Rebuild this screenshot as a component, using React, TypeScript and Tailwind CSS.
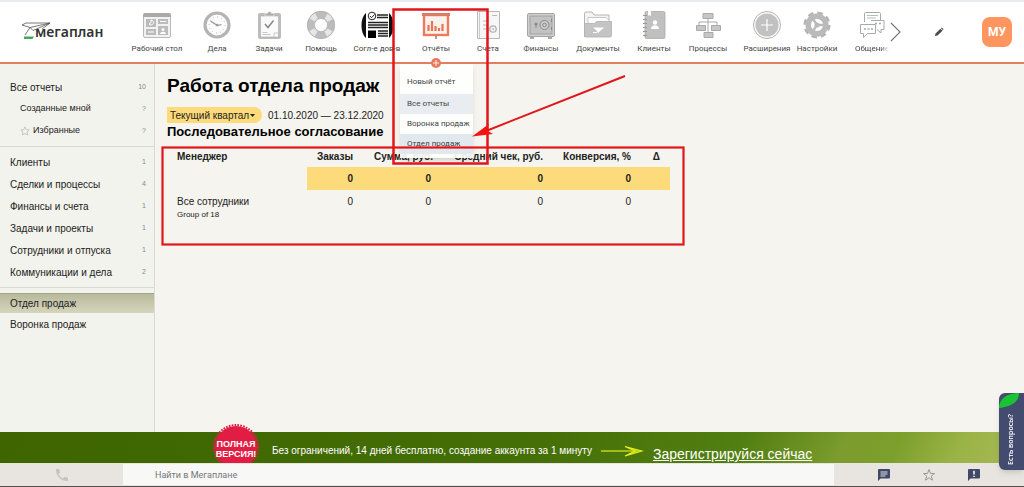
import React from "react";

const svg = "h-[30px] w-[30px] shrink-0";

function DesktopIcon() {
  return (
    <svg viewBox="0 0 30 30" className={svg} fill="none" aria-hidden="true">
      <rect x="1.500" y="4.500" width="27" height="23" rx="1.500" fill="#f1f1f1" stroke="#b9b9b9" />
      <path d="M1 5a2 2 0 0 1 2-2h24a2 2 0 0 1 2 2v2H1z" fill="#a9a9a9" />
      <path d="M4 9h10v8H4zM16 9h10v5H16zM4 19h10v6H4zM16 16h10v9H16z" fill="#bbb" />
      <path d="M7 14a2.500 2.500 0 1 0 2-4v2.500zM18 11.500h6M6 22h6" stroke="#fff" />
      <circle cx="21" cy="19.500" r="1.500" fill="#fff" />
      <path d="M18 24c0-3 6-3 6 0z" fill="#fff" />
    </svg>
  );
}

function ClockIcon() {
  return (
    <svg viewBox="0 0 30 30" className={svg} fill="none" aria-hidden="true">
      <circle cx="15" cy="15" r="12" fill="#fbfbfb" stroke="#b4b4b4" strokeWidth="3.200" />
      <circle cx="15" cy="15" r="8" stroke="#a9a9a9" strokeDasharray="0.8 3.39" />
      <path d="M8.500 11l7 4.500 4-1" stroke="#999" strokeWidth="1.200" />
      <circle cx="15" cy="15" r="1.300" fill="#999" />
    </svg>
  );
}

function TasksIcon() {
  return (
    <svg viewBox="0 0 30 30" className={svg} fill="none" aria-hidden="true">
      <rect x="4" y="3" width="23" height="26" rx="2" fill="#bcbcbc" />
      <rect x="6.500" y="6" width="18" height="21" fill="#fafafa" stroke="#aaa" strokeWidth=".6" />
      <path d="M11 6V3.500h2.500a2 2 0 0 1 4 0H20V6z" fill="#aaa" stroke="#fff" strokeWidth=".5" />
      <path d="M11 14l3 3.500 5.500-7" stroke="#888" strokeWidth="1.500" />
      <path d="M8.500 22.500h5M8.500 24.500h8M20 27v-4h4.500" stroke="#bbb" strokeWidth=".8" />
    </svg>
  );
}

function HelpIcon() {
  return (
    <svg viewBox="0 0 30 30" className={svg} fill="none" aria-hidden="true">
      <circle cx="15" cy="15" r="10.200" stroke="#bcbcbc" strokeWidth="7.400" />
      <circle cx="15" cy="15" r="10.200" stroke="#e6e6e6" strokeWidth="6" strokeDasharray="6 10.020" strokeDashoffset="-5" />
      <circle cx="15" cy="15" r="13.700" stroke="#aaa" strokeWidth=".6" />
      <circle cx="15" cy="15" r="6.500" stroke="#aaa" strokeWidth=".6" />
    </svg>
  );
}

function ApprovalIcon() {
  return (
    <svg viewBox="0 0 34 30" className="h-[30px] w-[34px] shrink-0" fill="none" aria-hidden="true">
      <path d="M6 3C0 8 0 23 6 28zM29 3c6 5 6 20 0 25z" fill="#111" />
      <circle cx="12" cy="6" r="3.800" stroke="#222" />
      <path d="M10 6l1.600 1.700L14.500 4.500" stroke="#222" />
      <path d="M17 5h11M17 7.500h11M8 12.500h20M8 15h20M8 17.500h20M18 21h10M18 23.500h10M18 26h10" stroke="#222" strokeWidth="1.300" />
      <path d="M8 20.500h8v7.500H8z" fill="#000" />
    </svg>
  );
}

function ReportsIcon() {
  return (
    <svg viewBox="0 0 30 30" className={svg} fill="none" aria-hidden="true">
      <rect x="3" y="5" width="24" height="20" fill="#fdf1ed" stroke="#ea7c5e" strokeWidth="2.400" />
      <path d="M1 3h28v3H1z" fill="#d97b62" />
      <path d="M7.500 21v-6M11 21V11M14.500 21v-5M18 21v-3M21.500 21v-7" stroke="#ea7351" strokeWidth="2.200" />
      <path d="M15 26v3" stroke="#9b7a70" strokeWidth="1.500" />
    </svg>
  );
}

function InvoiceIcon() {
  return (
    <svg viewBox="0 0 30 30" className={svg} fill="none" aria-hidden="true">
      <path d="M4.500 1.500h22v27h-22z" fill="#f7f7f7" stroke="#b8b8b8" />
      <path d="M6.500 2v26" stroke="#c9c9c9" />
      <path d="M10 11h6M10 15h5M10 19h4M19 5.500h5" stroke="#bbb" />
      <circle cx="20" cy="19" r="3.200" stroke="#b0b0b0" strokeWidth="1.300" />
      <circle cx="20" cy="19" r="1" fill="#bbb" />
    </svg>
  );
}

function SafeIcon() {
  return (
    <svg viewBox="0 0 30 30" className={svg} fill="none" aria-hidden="true">
      <rect x="1.500" y="3.500" width="27" height="23" rx="1.500" fill="#cfcfcf" stroke="#a5a5a5" />
      <rect x="4" y="6" width="22" height="18" fill="#c2c2c2" stroke="#999" strokeWidth=".8" />
      <circle cx="18.500" cy="15" r="4.500" fill="#ccc" stroke="#888" />
      <circle cx="18.500" cy="15" r="1.800" stroke="#888" />
      <circle cx="10" cy="14" r="1.600" fill="#888" />
      <path d="M10 14v4M25.500 9v3M25.500 17v3" stroke="#888" />
      <path d="M4 27h4v2H4zM22 27h4v2h-4z" fill="#aaa" />
    </svg>
  );
}

function DocumentsIcon() {
  return (
    <svg viewBox="0 0 30 30" className={svg} fill="none" aria-hidden="true">
      <path d="M1.500 27V3.500A1.500 1.500 0 0 1 3 2h6l2 3h15v8" fill="#f4f4f4" stroke="#b5b5b5" />
      <path d="M5 7.500h18l4 4V15H5z" fill="#fff" stroke="#bbb" strokeWidth=".8" />
      <path d="M1.500 13.500h10l2-2h15v14a1.500 1.500 0 0 1-1.500 1.500H3a1.500 1.500 0 0 1-1.500-1.500z" fill="#c4c4c4" stroke="#b0b0b0" strokeWidth=".8" />
      <path d="M10 17.500h11l-6 5.500-1.500-2.500z" fill="#fff" />
      <path d="M10 22.500h4" stroke="#fff" />
    </svg>
  );
}

function ClientsIcon() {
  return (
    <svg viewBox="0 0 30 30" className={svg} fill="none" aria-hidden="true">
      <rect x="6" y="1.500" width="20" height="27" rx="1.500" fill="#c0c0c0" stroke="#a9a9a9" strokeWidth=".8" />
      <path d="M4 5.500h4M4 9.500h4M4 13.500h4M4 17.500h4M4 21.500h4M4 25.500h4" stroke="#999" strokeWidth="1.200" />
      <path d="M9 1h3v5l-1.500-1L9 6z" fill="#fff" />
      <circle cx="16" cy="12.500" r="2.200" fill="#fff" />
      <path d="M12 19c0-5 8-5 8 0z" fill="#fff" />
    </svg>
  );
}

function ProcessesIcon() {
  return (
    <svg viewBox="0 0 30 30" className={svg} fill="none" aria-hidden="true">
      <path d="M15 8v14M6 16v-4h18v4" stroke="#aaa" />
      <path d="M10 3.500h10v5H10zM3.500 15.500h9v5h-9zM18.500 15.500h9v5h-9zM11 22.500h9v5h-9z" fill="#c6c6c6" stroke="#a9a9a9" />
    </svg>
  );
}

function ExtensionsIcon() {
  return (
    <svg viewBox="0 0 30 30" className={svg} fill="none" aria-hidden="true">
      <circle cx="15" cy="15" r="13.500" stroke="#b0b0b0" />
      <circle cx="15" cy="15" r="11.600" fill="#c1c1c1" />
      <path d="M15 9v12M9 15h12" stroke="#fff" strokeWidth="1.200" />
    </svg>
  );
}

function SettingsIcon() {
  return (
    <svg viewBox="0 0 30 30" className={svg} fill="none" aria-hidden="true">
      <circle cx="15" cy="15" r="12" stroke="#b4b4b4" strokeWidth="3" strokeDasharray="5.400 4.025" />
      <circle cx="15" cy="15" r="9" stroke="#bababa" strokeWidth="5" />
      <circle cx="15" cy="15" r="6.500" stroke="#a6a6a6" strokeWidth=".6" />
      <path d="M15 15h7M15 15l-4-6M15 15l-4 6" stroke="#bababa" strokeWidth="2.400" />
      <circle cx="15" cy="15" r="2.600" fill="#bababa" />
    </svg>
  );
}

function ChatIcon() {
  return (
    <svg viewBox="0 0 30 30" className={svg} fill="none" stroke="#a6abab" aria-hidden="true">
      <path d="M7.500 12V3.500A1 1 0 0 1 8.500 2.500h14a1 1 0 0 1 1 1V10" />
      <path d="M10 5.500h11M10 8h9" strokeWidth=".8" />
      <path d="M14 10.500h13v9h-3v3.500l-4-3.500" fill="#fff" />
      <path d="M3.500 14.500h15v9h-8l-4 4v-4h-3z" fill="#fff" />
      <path d="M7 19h2M10.500 19h2M14 19h2M18 13.500h2M22 13.500h2" strokeWidth="1.500" />
    </svg>
  );
}

const nav = [
  { label: "Рабочий стол", width: "w-[70px]", Icon: DesktopIcon },
  { label: "Дела", width: "w-[50px]", Icon: ClockIcon },
  { label: "Задачи", width: "w-[54px]", Icon: TasksIcon },
  { label: "Помощь", width: "w-[50px]", Icon: HelpIcon },
  { label: "Согл-е дов-в", width: "w-[62px]", Icon: ApprovalIcon },
  { label: "Отчёты", width: "w-[56px]", Icon: ReportsIcon, current: true },
  { label: "Счета", width: "w-[48px]", Icon: InvoiceIcon },
  { label: "Финансы", width: "w-[58px]", Icon: SafeIcon },
  { label: "Документы", width: "w-[56px]", Icon: DocumentsIcon },
  { label: "Клиенты", width: "w-[56px]", Icon: ClientsIcon },
  { label: "Процессы", width: "w-[52px]", Icon: ProcessesIcon },
  { label: "Расширения", width: "w-[66px]", Icon: ExtensionsIcon },
  { label: "Настройки", width: "w-[34px]", Icon: SettingsIcon },
  { label: "Общение", width: "w-[54px] pl-[22px]", Icon: ChatIcon, fading: true },
];

const menu = [
  { label: "Новый отчёт", look: "h-6" },
  { label: "Все отчеты", look: "h-5 bg-[#e9edf2]" },
  { label: "Воронка продаж", look: "h-5" },
  { label: "Отдел продаж", look: "h-5 bg-[#e1e8ee]" },
];

const sections = [
  ["Клиенты", "1"],
  ["Сделки и процессы", "4"],
  ["Финансы и счета", "1"],
  ["Задачи и проекты", "1"],
  ["Сотрудники и отпуска", "1"],
  ["Коммуникации и дела", "2"],
];

function Header() {
  return (
    <header className="relative z-10 flex h-16 items-stretch border-t-2 border-b-2 border-t-[#e9ecee] border-b-[#e37f60] bg-white font-[Roboto,sans-serif]">
      <a href="#" className="relative flex w-[122px] shrink-0 items-center pl-[35px]" aria-label="мегаплан">
        <svg viewBox="0 0 30 18" className="absolute top-5 left-[21px] h-[18px] w-[30px]" fill="none" aria-hidden="true">
          <path d="M1 3l4-2h24l-8 6M1 3l8 2.500L29 1M9 5.500L4 13M9 5.500l3 3L29 1" stroke="#555" strokeWidth=".8" />
          <path d="M3 14.500h10l-1.500 2.500H3z" fill="#41a85f" />
        </svg>
        <span className="relative text-[14px] leading-5 font-semibold text-[#333] font-['Noto_Sans',sans-serif]">мегаплан</span>
      </a>
      <nav className="flex shrink-0">
        {nav.map(({ label, width, Icon, current, fading }) => (
          <a key={label} href="#" className={"relative flex shrink-0 flex-col items-center pt-2 " + width}>
            <Icon />
            <span className={"mt-1 text-[8px] leading-[10px] whitespace-nowrap text-[#444] " + (fading ? "mask-r-from-75%" : "")}>{label}</span>
            {current && (
              <svg viewBox="0 0 10 10" className="absolute -bottom-1.5 left-1/2 z-10 h-[10px] w-[10px] -translate-x-1/2" aria-hidden="true">
                <circle cx="5" cy="5" r="5" fill="#e8795a" />
                <path d="M5 2v6M2 5h6" stroke="#ffe3da" strokeWidth="1.200" />
              </svg>
            )}
          </a>
        ))}
      </nav>
      <button type="button" aria-label="Далее" className="w-4 shrink-0">
        <svg viewBox="0 0 16 24" className="h-6 w-4" fill="none" stroke="#777" aria-hidden="true">
          <path d="M3 3l9 9-9 9" strokeWidth="1.200" />
        </svg>
      </button>
      <div className="ml-auto flex items-center gap-[38px] pr-3">
        <button type="button" aria-label="Редактировать">
          <svg viewBox="0 0 10 10" className="h-[10px] w-[10px]" fill="#4b4b5c" aria-hidden="true">
            <path d="M1 9l.5-2.500L6.500 1.800l2 2L3.500 8.500zM7 1.300l.8-.8 1.800 1.800-.8.8z" />
          </svg>
        </button>
        <button type="button" className="h-[30px] w-[30px] rounded-lg bg-[#ff965f] text-[12px] font-bold text-white">МУ</button>
      </div>
      <ul className="absolute top-[62px] left-[400px] w-[73px] bg-white/90 pt-1.5 pb-1 text-[8px] text-[#444] shadow-md">
        {menu.map((item) => (
          <li key={item.label} className={"flex items-center pl-[7px] whitespace-nowrap " + item.look}>
            <a href="#">{item.label}</a>
          </li>
        ))}
      </ul>
    </header>
  );
}

function SideLink({ label, count }: { label: string; count?: string }) {
  return (
    <a href="#" className="flex h-[22px] items-center justify-between pr-2 pl-[10px]">
      {label}
      <span className="text-[7px] text-[#888]">{count}</span>
    </a>
  );
}

function Sidebar() {
  return (
    <aside className="w-[155px] shrink-0 border-r border-[#dcdad5] bg-[#f3f3ed] pt-3 text-[10px] text-[#222]">
      <SideLink label="Все отчеты" count="10" />
      <a href="#" className="flex h-[22px] items-center justify-between pr-2 pl-5 text-[9px]">
        Созданные мной
        <span className="text-[7px] text-[#888]">?</span>
      </a>
      <a href="#" className="flex h-[22px] items-center pr-2 pl-5 text-[9px]">
        <svg viewBox="0 0 10 10" className="mr-[3px] h-[10px] w-[10px]" fill="none" stroke="#bbb" strokeWidth=".8" aria-hidden="true">
          <path d="M5 .8l1.200 2.900 3 .3L7 6l.7 3L5 7.500 2.300 9 3 6 .8 4l3-.3z" />
        </svg>
        Избранные
        <span className="ml-auto text-[7px] text-[#888]">?</span>
      </a>
      <div className="mt-1 border-t border-[#d8d7d0] pt-1">
        {sections.map(([label, count]) => (
          <SideLink key={label} label={label} count={count} />
        ))}
      </div>
      <div className="mt-1 border-t border-[#d8d7d0] pt-[5px]">
        <a href="#" className="flex h-5 items-center border-t border-[#a5a688] bg-linear-to-b from-[#b9ba9c] to-[#d5d5bd] pl-[10px]">Отдел продаж</a>
        <SideLink label="Воронка продаж" />
      </div>
    </aside>
  );
}

function Report() {
  return (
    <main className="grow bg-[#f5f4ef] pt-2 pl-3 text-[10px] text-[#222]">
      <h1 className="text-[19px] leading-7 font-bold text-black">Работа отдела продаж</h1>
      <div className="mt-[7px] flex h-4 items-center gap-[6px]">
        <button type="button" className="flex h-4 w-[95px] items-center rounded-r-lg bg-[#fedb7a] pl-[3px] whitespace-nowrap">
          Текущий квартал
          <svg viewBox="0 0 5 3" className="ml-px h-[3px] w-[5px]" fill="#222" aria-hidden="true">
            <path d="M0 0h5L2.500 3z" />
          </svg>
        </button>
        <span>01.10.2020 — 23.12.2020</span>
      </div>
      <h2 className="text-[13px] leading-[18px] font-bold text-black">Последовательное согласование</h2>
      <table className="mt-1 table-fixed border-collapse text-right">
        <colgroup>
          <col className="w-[140px]" />
          <col className="w-[56px]" />
          <col className="w-[78px]" />
          <col className="w-[112px]" />
          <col className="w-[88px]" />
          <col className="w-[29px]" />
        </colgroup>
        <thead>
          <tr className="h-[22px] whitespace-nowrap">
            <th className="pl-[10px] text-left">Менеджер</th>
            <th className="pr-[10px]">Заказы</th>
            <th className="pr-2">Сумма, руб.</th>
            <th className="pr-[10px]">Средний чек, руб.</th>
            <th className="pr-[10px]">Конверсия, %</th>
            <th className="pr-[10px]">Δ</th>
          </tr>
        </thead>
        <tbody>
          <tr className="h-[23px] font-bold">
            <td />
            <td className="bg-[#fedb7a] pr-[10px]">0</td>
            <td className="bg-[#fedb7a] pr-[10px]">0</td>
            <td className="bg-[#fedb7a] pr-[10px]">0</td>
            <td className="bg-[#fedb7a] pr-[10px]">0</td>
            <td className="bg-[#fedb7a]" />
          </tr>
          <tr className="align-top leading-4">
            <td className="pt-1 pl-[10px] text-left">
              Все сотрудники
              <div className="text-[8px] leading-[10px]">Group of 18</div>
            </td>
            <td className="pt-1 pr-[10px]">0</td>
            <td className="pt-1 pr-[10px]">0</td>
            <td className="pt-1 pr-[10px]">0</td>
            <td className="pt-1 pr-[10px]">0</td>
            <td />
          </tr>
        </tbody>
      </table>
    </main>
  );
}

function Banner() {
  return (
    <section className="relative flex h-[31px] items-end bg-[linear-gradient(115deg,#3e6500_0%,#446e06_50%,#527f11_72%,#7c9c2e_82%,#7c9f2c_87%,#9ab346_93%,#a9b957_100%)] text-white">
      <svg viewBox="0 0 46 39" className="absolute bottom-0 left-[213px] h-[39px] w-[46px]" aria-hidden="true">
        <circle cx="23" cy="23" r="21" fill="#e11d43" />
        <circle cx="23" cy="23" r="22" fill="none" stroke="#e11d43" strokeWidth="2" strokeDasharray="1.700 1.200" />
        <text x="23" y="23" textAnchor="middle" fill="#fff" className="text-[9px] font-bold font-['Liberation_Sans_Narrow',sans-serif]">ПОЛНАЯ</text>
        <text x="23" y="33" textAnchor="middle" fill="#fff" className="text-[9px] font-bold font-['Liberation_Sans_Narrow',sans-serif]">ВЕРСИЯ!</text>
      </svg>
      <span className="mb-1 ml-[272px] text-[10px] leading-4 whitespace-nowrap">Без ограничений, 14 дней бесплатно, создание аккаунта за 1 минуту</span>
      <svg viewBox="0 0 44 12" className="mb-1.5 ml-2 h-3 w-11 shrink-0" fill="none" aria-hidden="true">
        <path d="M1 6h38" stroke="#c3d31c" strokeWidth="1.400" />
        <path d="M25 1.500l17 4.500-17 5 10-5z" fill="#b4c81a" stroke="#e6f01b" strokeWidth="1.200" />
      </svg>
      <a href="#" className="ml-[9px] text-[14px] leading-[18px] whitespace-nowrap underline">Зарегистрируйся сейчас</a>
    </section>
  );
}

function BottomBar() {
  return (
    <footer className="flex h-6 items-start border-b border-[#55504e] bg-[#e8e5e0] pt-px font-[Roboto,sans-serif]">
      <button type="button" aria-label="Телефон" className="flex h-[21px] w-[123px] shrink-0 items-center justify-center">
        <svg viewBox="0 0 24 24" className="h-4 w-4" fill="#c6c2be" aria-hidden="true">
          <path d="M6.600 10.800c1.400 2.800 3.800 5.100 6.600 6.600l2.200-2.200c.3-.3.700-.4 1-.2 1.100.4 2.300.6 3.600.6.600 0 1 .4 1 1V20c0 .6-.4 1-1 1C10.600 21 3 13.400 3 4c0-.6.4-1 1-1h3.500c.6 0 1 .4 1 1 0 1.300.2 2.500.6 3.600.1.300 0 .7-.2 1z" />
        </svg>
      </button>
      <input type="search" aria-label="Найти в Мегаплане" placeholder="Найти в Мегаплане" className="h-[21px] min-w-0 grow bg-[#f8f8f7] pl-8 text-[9px] text-[#666] placeholder:text-[#777]" />
      <div className="flex h-[21px] w-[190px] shrink-0 items-center gap-[31px] pl-[43px]">
        <button type="button" aria-label="Сообщения">
          <svg viewBox="0 0 14 14" className="h-3.5 w-3.5" aria-hidden="true">
            <path d="M1 2a1 1 0 0 1 1-1h10a1 1 0 0 1 1 1v7.500a1 1 0 0 1-1 1H3.500L1 13z" fill="#414866" />
            <path d="M3.500 4h7M3.500 6h7M3.500 8h5" stroke="#dfe0e6" />
          </svg>
        </button>
        <button type="button" aria-label="Избранное">
          <svg viewBox="0 0 14 14" className="h-3.5 w-3.5" fill="none" stroke="#999" aria-hidden="true">
            <path d="M7 1.500l1.500 4h4l-3.200 2.600 1.200 4.100L7 9.800l-3.500 2.400 1.200-4.100L1.500 5.500h4z" />
          </svg>
        </button>
        <button type="button" aria-label="Уведомления">
          <svg viewBox="0 0 14 14" className="h-3.5 w-3.5" aria-hidden="true">
            <path d="M1 2a1 1 0 0 1 1-1h10a1 1 0 0 1 1 1v7.500a1 1 0 0 1-1 1H3.500L1 13z" fill="#414866" />
            <path d="M7 2.800v3.700M7 7.700v1.300" stroke="#fff" strokeWidth="1.500" />
          </svg>
        </button>
      </div>
    </footer>
  );
}

function Annotations() {
  return (
    <svg viewBox="0 0 700 260" className="pointer-events-none absolute top-0 left-0 z-20 h-[260px] w-[700px]" fill="none" stroke="#e3151a" aria-hidden="true">
      <rect x="393.500" y="9.500" width="94" height="154" strokeWidth="2.500" />
      <rect x="162.500" y="147.500" width="521" height="97" strokeWidth="2.200" />
      <path d="M625 76L486 131" strokeWidth="2" />
      <path d="M472 136.500l17-12.500-2 6.500 6 3.500z" fill="#f51414" stroke="none" />
    </svg>
  );
}

export default function App() {
  return (
    <div className="relative flex min-h-screen flex-col overflow-hidden bg-[#f5f4ef] font-['Liberation_Sans',Arial,sans-serif]">
      <Header />
      <div className="flex grow">
        <Sidebar />
        <Report />
      </div>
      <Banner />
      <BottomBar />
      <button type="button" className="absolute right-0 bottom-[17px] flex h-[77px] w-[25px] items-center justify-center overflow-hidden rounded-l-md bg-[#434c6e] pt-4 shadow-md">
        <svg viewBox="0 0 20 15" className="absolute top-0 left-0 h-[15px] w-5" aria-hidden="true">
          <path d="M0 15C0 6 8 0 20 0c0 9-8 14-20 15z" fill="#18c433" />
        </svg>
        <span className="rotate-180 text-[7px] font-semibold whitespace-nowrap text-white [writing-mode:vertical-rl] font-['Open_Sans',sans-serif]">Есть вопросы?</span>
      </button>
      <Annotations />
    </div>
  );
}
